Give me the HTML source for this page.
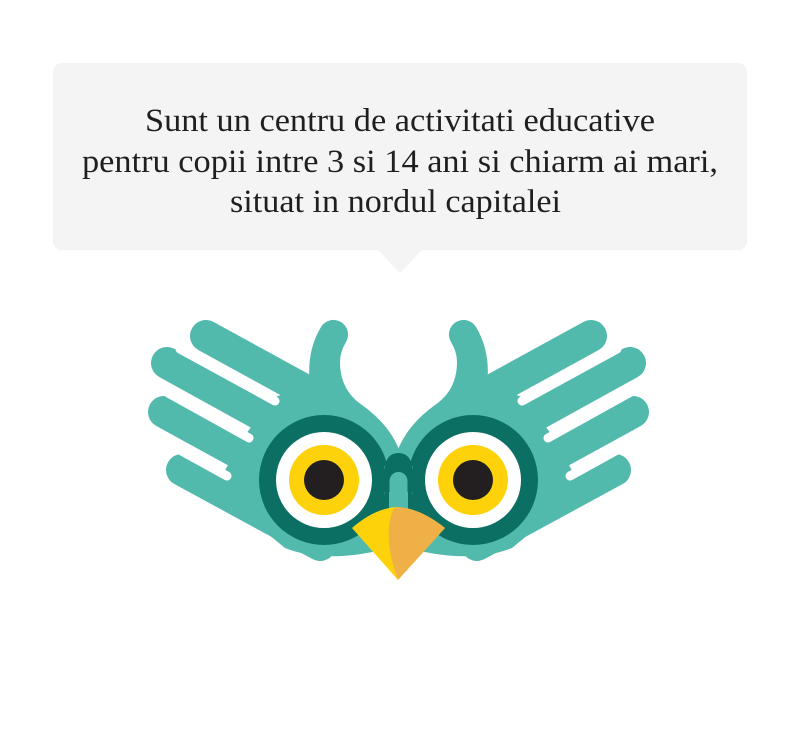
<!DOCTYPE html>
<html><head><meta charset="utf-8"><style>
html,body{margin:0;padding:0;background:#fff;width:800px;height:754px;overflow:hidden}
</style></head><body>
<svg width="800" height="754" viewBox="0 0 800 754" xmlns="http://www.w3.org/2000/svg">
<rect x="53" y="63" width="694" height="187" rx="9" fill="#f4f4f4"/>
<polygon points="378,250 422,250 400,273" fill="#f4f4f4"/>
<g font-family="Liberation Serif, serif" font-size="33" fill="#1f1f1f" text-anchor="start">
<text x="145" y="131" textLength="510" lengthAdjust="spacingAndGlyphs">Sunt un centru de activitati educative</text>
<text x="82" y="172" textLength="636" lengthAdjust="spacingAndGlyphs">pentru copii intre 3 si 14 ani si chiarm ai mari,</text>
<text x="230" y="212" textLength="331" lengthAdjust="spacingAndGlyphs">situat in nordul capitalei</text>
</g>
<defs>
<g id="half">
  <g stroke="#52b9ad" stroke-width="32" stroke-linecap="round">
    <line x1="206" y1="336" x2="330" y2="404"/>
    <line x1="167" y1="363" x2="330" y2="453"/>
    <line x1="164" y1="412" x2="330" y2="503"/>
    <line x1="182" y1="470" x2="320" y2="545"/>
  </g>
  <path d="M321,327 Q306,352 310,385 L272,398 L246,434 L224,472 L200,478 L285,548 Q330,566 400,545 L400,452 Q390,425 362,405 Q340,390 340,362 Q340,352 346,342 A13,13 0 0 0 321,327 Z" fill="#52b9ad"/>
  <g stroke="#fff" stroke-width="9" stroke-linecap="round">
    <line x1="275" y1="401" x2="180" y2="349"/>
    <line x1="249" y1="438" x2="150" y2="383"/>
    <line x1="227" y1="476" x2="140" y2="428"/>
  </g>
  <circle cx="324" cy="480" r="65" fill="#0c6f63"/>
</g>
<g id="eye">
  <circle cx="324" cy="480" r="48" fill="#fff"/>
  <circle cx="324" cy="480" r="35" fill="#fdd20a"/>
  <circle cx="324" cy="480" r="20" fill="#231f20"/>
</g>
</defs>
<use href="#half"/>
<use href="#half" transform="translate(797,0) scale(-1,1)"/>
<rect x="384" y="466" width="29" height="60" fill="#52b9ad"/>
<path d="M384,492 L384,470 Q386,453 398.5,453 Q411,453 413,470 L413,492 Z" fill="#0c6f63"/>
<circle cx="398.5" cy="481" r="9" fill="#52b9ad"/>
<rect x="389.5" y="481" width="18" height="30" fill="#52b9ad"/>
<path d="M384,480 A65,65 0 0 1 376,520 L389,525 L389,480 Z" fill="#0c6f63"/>
<path d="M413,480 A65,65 0 0 0 421,520 L408,525 L408,480 Z" fill="#0c6f63"/>
<use href="#eye"/>
<use href="#eye" transform="translate(797,0) scale(-1,1)"/>
<path d="M352,528 Q375,508 397,507 Q420,508 445,528 L398,580 Z" fill="#fdd20a"/>
<path d="M397,507 Q420,508 445,528 L398,580 Q385,545 390,520 Q392,509 397,507 Z" fill="#f0b048"/>
</svg>
</body></html>
